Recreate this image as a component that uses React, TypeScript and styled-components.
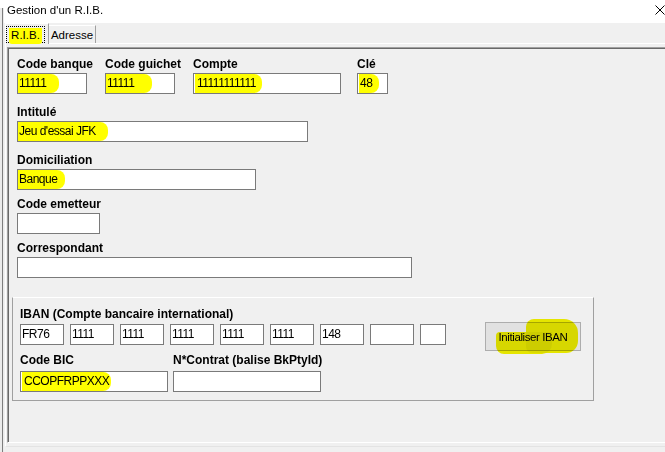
import React from 'react';
import styled, { createGlobalStyle } from 'styled-components';

const GlobalStyle = createGlobalStyle`
  html, body { margin: 0; padding: 0; background: #f0f0f0; }
  body { font-family: "Liberation Sans", Arial, sans-serif; overflow: hidden; }
`;

const Screen = styled.div`
  width: 665px;
  height: 452px;
  display: flex;
  background: #f0f0f0;
  overflow: hidden;
`;

const LeftEdge = styled.div`
  width: 4px;
  flex: none;
  display: flex;
  flex-direction: column;
  background: #ebebeb;
`;

const LeftEdgeTop = styled.div`
  height: 8px;
  background: #fff;
`;

const LeftEdgeLine = styled.div`
  flex: 1;
  width: 1px;
  margin-left: 2px;
  background: #7d7d7d;
`;

const Window = styled.div`
  flex: 1;
  min-width: 0;
  display: flex;
  flex-direction: column;
`;

const TitleBar = styled.div`
  height: 23px;
  flex: none;
  box-sizing: border-box;
  background: #fff;
  display: flex;
  align-items: center;
  justify-content: space-between;
  padding: 0 0 3px 3px;
  font-size: 11.5px;
  color: #000;
`;

const TabStrip = styled.div`
  position: relative;
  z-index: 1;
  height: 20px;
  flex: none;
  display: flex;
  align-items: flex-end;
  padding-left: 1px;
`;

const Tab = styled.div<{ $active?: boolean }>`
  box-sizing: border-box;
  height: ${p => (p.$active ? 21 : 18)}px;
  width: ${p => (p.$active ? 44 : 47)}px;
  margin-bottom: ${p => (p.$active ? -1 : 0)}px;
  background: #f0f0f0;
  border-top: 1px solid #fff;
  border-left: ${p => (p.$active ? '1px solid #fff' : 'none')};
  border-right: 1px solid #a0a0a0;
  display: flex;
  justify-content: center;
  align-items: ${p => (p.$active ? 'flex-start' : 'center')};
  padding-top: ${p => (p.$active ? 2 : 0)}px;
  font-size: 11.5px;
  color: #000;
`;

const FocusRect = styled.div`
  box-sizing: border-box;
  width: 39px;
  height: 17px;
  margin-right: 3px;
  border: 1px dotted #000;
  display: flex;
  align-items: center;
  justify-content: center;
`;

const TabMark = styled.span`
  background: #ffff00;
  padding: 0 2px 1px;
  line-height: 15px;
  margin-top: 3px;
  border-radius: 0 0 3px 3px;
`;

const TabPage = styled.div`
  flex: none;
  height: 404px;
  box-sizing: border-box;
  margin-left: 1px;
  border-top: 1px solid #fff;
  border-left: 1px solid #fff;
  border-bottom: 1px solid #e3e3e3;
  padding: 3px 0 3px 1px;
  display: flex;
`;

const Panel = styled.div`
  flex: 1;
  display: flex;
  flex-direction: column;
  border-top: 1px solid #a0a0a0;
  border-left: 1px solid #a0a0a0;
  border-bottom: 1px solid #fff;
  box-shadow: inset 1px 1px 0 #696969;
  padding: 0 0 0 4px;
`;

const Fields = styled.div`
  display: flex;
  flex-direction: column;
  padding: 8px 0 0 5px;
`;

const Row = styled.div<{ $gap?: number; $mt?: number }>`
  display: flex;
  align-items: flex-start;
  gap: ${p => p.$gap ?? 0}px;
  margin-top: ${p => p.$mt ?? 0}px;
`;

const Group = styled.div<{ $w?: number; $mt?: number }>`
  flex: none;
  display: flex;
  flex-direction: column;
  width: ${p => (p.$w ? `${p.$w}px` : 'auto')};
  margin-top: ${p => p.$mt ?? 0}px;
`;

const Label = styled.div<{ $mb?: number }>`
  height: 16px;
  font: bold 12px/16px "Liberation Sans", Arial, sans-serif;
  color: #000;
  white-space: nowrap;
  margin-bottom: ${p => p.$mb ?? 1}px;
`;

const Box = styled.div<{ $w: number }>`
  width: ${p => p.$w}px;
  height: 21px;
  flex: none;
  box-sizing: border-box;
  border: 1px solid #7a7a7a;
  background: #fff;
  display: flex;
  align-items: stretch;
  padding-left: 1px;
  font: 12px/19px "Liberation Sans", Arial, sans-serif;
  letter-spacing: -0.5px;
  color: #000;
  white-space: nowrap;
  overflow: hidden;
`;

const Mark = styled.span<{ $pl?: number; $pr: number; $ml?: number }>`
  display: block;
  background: #ffff00;
  margin-left: ${p => p.$ml ?? -1}px;
  padding: 0 ${p => p.$pr}px 0 ${p => p.$pl ?? 1}px;
  border-radius: 0 8px 8px 0;
`;

const IbanBox = styled.div`
  width: 582px;
  box-sizing: border-box;
  margin-top: 19px;
  border: 1px solid #a0a0a0;
  border-top-color: #fff;
  padding: 8px 0 8px 7px;
  display: flex;
  flex-direction: column;
`;

const Button = styled.button`
  position: relative;
  flex: none;
  width: 96px;
  height: 29px;
  margin: -2px 0 -8px 33px;
  padding: 0;
  box-sizing: border-box;
  background: #e1e1e1;
  border: 1px solid #adadad;
  font: 11.5px "Liberation Sans", Arial, sans-serif;
  letter-spacing: -0.4px;
  color: #000;

  &::before,
  &::after {
    content: '';
    position: absolute;
    background: #f4f400;
    mix-blend-mode: multiply;
  }
  &::before {
    left: 40px;
    top: -4px;
    width: 52px;
    height: 34px;
    border-radius: 8px 14px 12px 6px;
  }
  &::after {
    left: 10px;
    top: 9px;
    width: 56px;
    height: 22px;
    border-radius: 4px 0 10px 8px;
  }
`;

const CloseIcon = () => (
  <svg width="10" height="10" viewBox="0 0 10 10" style={{ flex: 'none' }}>
    <path d="M0.5 0.5 L9.5 9.5 M9.5 0.5 L0.5 9.5" stroke="#000" strokeWidth="1" fill="none" />
  </svg>
);

const ibanValues = ['FR76', '1111', '1111', '1111', '1111', '1111', '148', '', ''];

export default function App() {
  return (
    <>
      <GlobalStyle />
      <Screen>
        <LeftEdge>
          <LeftEdgeTop />
          <LeftEdgeLine />
        </LeftEdge>
        <Window>
          <TitleBar>
            <span>Gestion d'un R.I.B.</span>
            <CloseIcon />
          </TitleBar>
          <TabStrip>
            <Tab $active>
              <FocusRect>
                <TabMark>R.I.B.</TabMark>
              </FocusRect>
            </Tab>
            <Tab>Adresse</Tab>
          </TabStrip>
          <TabPage>
            <Panel>
              <Fields>
                <Row>
                  <Group $w={88}>
                    <Label>Code banque</Label>
                    <Box $w={70}>
                      <Mark $pr={13}>11111</Mark>
                    </Box>
                  </Group>
                  <Group $w={88}>
                    <Label>Code guichet</Label>
                    <Box $w={70}>
                      <Mark $pr={18}>11111</Mark>
                    </Box>
                  </Group>
                  <Group $w={164}>
                    <Label>Compte</Label>
                    <Box $w={148}>
                      <Mark $ml={0} $pl={2} $pr={6}>11111111111</Mark>
                    </Box>
                  </Group>
                  <Group>
                    <Label>Clé</Label>
                    <Box $w={31}>
                      <Mark $ml={0} $pl={1} $pr={7}>48</Mark>
                    </Box>
                  </Group>
                </Row>
                <Group $mt={10}>
                  <Label>Intitulé</Label>
                  <Box $w={291}>
                    <Mark $pr={12}>Jeu d'essai JFK</Mark>
                  </Box>
                </Group>
                <Group $mt={10}>
                  <Label>Domiciliation</Label>
                  <Box $w={239}>
                    <Mark $pr={8}>Banque</Mark>
                  </Box>
                </Group>
                <Group $mt={6}>
                  <Label>Code emetteur</Label>
                  <Box $w={83} />
                </Group>
                <Group $mt={6}>
                  <Label>Correspondant</Label>
                  <Box $w={395} />
                </Group>
              </Fields>
              <IbanBox>
                <Label $mb={2}>IBAN (Compte bancaire international)</Label>
                <Row $gap={6}>
                  {ibanValues.map((v, i) => (
                    <Box key={i} $w={i === 8 ? 26 : 44}>
                      <span>{v}</span>
                    </Box>
                  ))}
                  <Button type="button">Initialiser IBAN</Button>
                </Row>
                <Row $gap={5} $mt={7}>
                  <Group $w={148}>
                    <Label $mb={3}>Code BIC</Label>
                    <Box $w={148}>
                      <Mark $ml={0} $pl={2} $pr={2}>CCOPFRPPXXX</Mark>
                    </Box>
                  </Group>
                  <Group>
                    <Label $mb={3}>N*Contrat (balise BkPtyId)</Label>
                    <Box $w={148} />
                  </Group>
                </Row>
              </IbanBox>
            </Panel>
          </TabPage>
        </Window>
      </Screen>
    </>
  );
}
